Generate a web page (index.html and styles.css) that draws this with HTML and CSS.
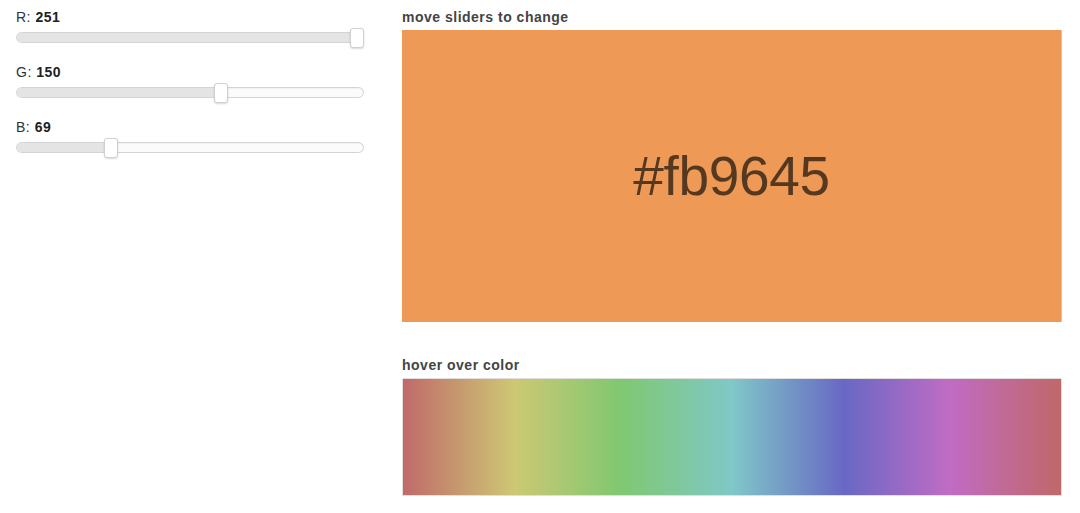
FILE: index.html
```html
<!DOCTYPE html>
<html>
<head>
<meta charset="utf-8">
<link rel="stylesheet" href="styles.css">
</head>
<body>
<div class="page">
  <div class="controls">
    <div class="row">
      <div class="label">R: <b>251</b></div>
      <div class="track">
        <div class="fill" style="width: 340px"></div>
        <div class="thumb" style="left: 333px"></div>
      </div>
    </div>
    <div class="row">
      <div class="label">G: <b>150</b></div>
      <div class="track">
        <div class="fill" style="width: 204px"></div>
        <div class="thumb" style="left: 197px"></div>
      </div>
    </div>
    <div class="row">
      <div class="label">B: <b>69</b></div>
      <div class="track">
        <div class="fill" style="width: 94px"></div>
        <div class="thumb" style="left: 87px"></div>
      </div>
    </div>
  </div>
  <div class="display">
    <div class="title">move sliders to change</div>
    <div class="swatch">#fb9645</div>
    <div class="title second">hover over color</div>
    <div class="spectrum"></div>
  </div>
</div>
</body>
</html>
```
FILE: styles.css
```css
html, body {
  margin: 0;
  padding: 0;
  background: #ffffff;
}
body {
  font-family: "Liberation Sans", Arial, Helvetica, sans-serif;
  font-size: 14px;
  letter-spacing: 0.5px;
  color: #333333;
}
.page {
  display: flex;
  gap: 38px;
  padding: 9px 0 0 16px;
}
.controls {
  width: 348px;
  display: flex;
  flex-direction: column;
}
.row {
  display: flex;
  flex-direction: column;
  gap: 7px;
  margin-bottom: 21px;
}
.label {
  line-height: 16px;
  height: 16px;
  color: #333;
}
.label b {
  font-weight: bold;
  color: #222;
}
.track {
  position: relative;
  height: 11px;
  box-sizing: border-box;
  border: 1px solid #d4d4d4;
  border-radius: 6px;
  background: #fbfbfb;
  box-shadow: inset 0 1px 1px rgba(0,0,0,0.04);
}
.fill {
  height: 100%;
  background: #e4e4e4;
  border-radius: 5px 0 0 5px;
}
.thumb {
  position: absolute;
  top: -5px;
  width: 14px;
  height: 20px;
  box-sizing: border-box;
  background: #ffffff;
  border: 1px solid #d0d0d0;
  border-radius: 3px;
  box-shadow: 0 1px 2px rgba(0,0,0,0.15);
}
.display {
  width: 660px;
  display: flex;
  flex-direction: column;
}
.title {
  font-weight: bold;
  line-height: 16px;
  color: #444444;
  margin-bottom: 5px;
}
.title.second {
  margin-top: 35px;
  margin-bottom: 5px;
}
.swatch {
  height: 292px;
  background: #ee9955;
  display: flex;
  align-items: center;
  justify-content: center;
  font-size: 55px;
  letter-spacing: -0.3px;
  color: #553820;
  box-sizing: border-box;
  border-right: 1px solid #f3b98a;
}
.spectrum {
  height: 118px;
  box-sizing: border-box;
  border: 1px solid #e2dede;
  background: linear-gradient(to right,
    #c06a6a 0%,
    #cdc874 17%,
    #80c870 33%,
    #7fc8c8 50%,
    #6868c4 67%,
    #c06cc4 83%,
    #c06868 100%);
}
```
